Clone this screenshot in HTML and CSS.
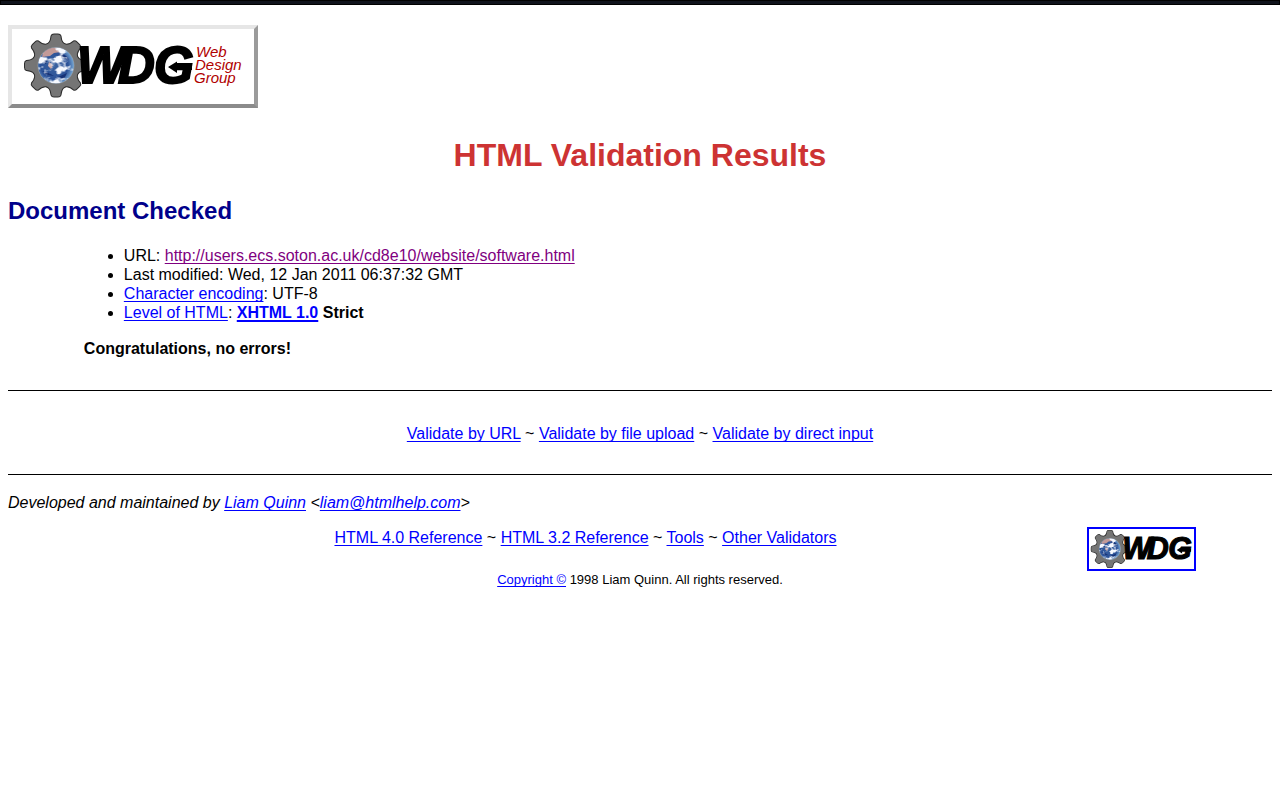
FILE: index.html
```html
<!DOCTYPE html>
<html lang="en">
<head>
<meta charset="utf-8">
<title>HTML Validation Results</title>
<link rel="stylesheet" href="styles.css">
</head>
<body>
<div class="top-bar"></div>
<div class="page">
  <header>
    <a class="brand" href="#" aria-label="Web Design Group">
      <svg class="brand-art" width="242" height="75" viewBox="12 29 242 75">
        <defs>
          <radialGradient id="sea" cx=".45" cy=".5" r=".55">
            <stop offset="0" stop-color="#39619f"/>
            <stop offset=".7" stop-color="#2c5298"/>
            <stop offset="1" stop-color="#79a9d4"/>
          </radialGradient>
          <filter id="clouds" x="0" y="0" width="1" height="1">
            <feTurbulence type="fractalNoise" baseFrequency=".09 .14" numOctaves="3" seed="8"/>
            <feColorMatrix values="0 0 0 0 .93  0 0 0 0 .95  0 0 0 0 1  5 0 0 0 -2.400"/>
            <feComposite in2="SourceGraphic" operator="in"/>
          </filter>
          <clipPath id="globe"><circle cx="56" cy="65.500" r="18"/></clipPath>
          <path id="tooth" d="M44 46 C49 44 51 42 51.500 36 Q52 34.500 54 34.500 H58 Q60 34.500 60.500 36 C61 42 63 44 68 46 L62 60 H50 Z"/>
          <g id="teeth">
            <use href="#tooth"/>
            <use href="#tooth" transform="rotate(45 56 65.500)"/>
            <use href="#tooth" transform="rotate(90 56 65.500)"/>
            <use href="#tooth" transform="rotate(135 56 65.500)"/>
            <use href="#tooth" transform="rotate(180 56 65.500)"/>
            <use href="#tooth" transform="rotate(225 56 65.500)"/>
            <use href="#tooth" transform="rotate(270 56 65.500)"/>
            <use href="#tooth" transform="rotate(315 56 65.500)"/>
          </g>
          <g id="mark">
            <use href="#teeth" fill="#333" stroke="#2d2d2d" stroke-width="2"/>
            <use href="#teeth" fill="#757575"/>
            <circle cx="56" cy="65.500" r="21" fill="#757575"/>
            <circle cx="56" cy="65.500" r="18.500" fill="#8f9499"/>
            <g clip-path="url(#globe)">
              <circle cx="56" cy="65.500" r="18" fill="url(#sea)"/>
              <path fill="#c39a98" d="M43 53 Q48 47 58 48 L61 52 L54 53 L50 56 L42 57Z M49 62 L53 65 L51 69 L48 66Z"/>
              <path fill="#173377" d="M60 53 Q67 55 69 60 L63 58 L57 58Z M42 71 L49 73 L54 76 L47 75Z M58 77 L67 73 L64 79Z M42 61 L47 60 L46 64Z"/>
              <circle cx="56" cy="65.500" r="18" filter="url(#clouds)"/>
            </g>
            <g class="mark-letters">
              <text x="77" y="83">W</text>
              <text x="118" y="83">D</text>
              <text x="154" y="83">G</text>
            </g>
            <path d="M168 67 L177 61.500 V65 H192 V70 H177 V73Z"/>
          </g>
        </defs>
        <use href="#mark"/>
        <g class="mark-words">
          <text x="196" y="57">Web</text>
          <text x="195" y="70">Design</text>
          <text x="194" y="83">Group</text>
        </g>
      </svg>
    </a>
  </header>
  <main>
    <h1>HTML Validation Results</h1>
    <h2>Document Checked</h2>
    <div class="results">
      <ul>
        <li>URL: <a class="visited" href="#">http://users.ecs.soton.ac.uk/cd8e10/website/software.html</a></li>
        <li>Last modified: Wed, 12 Jan 2011 06:37:32 GMT</li>
        <li><a href="#">Character encoding</a>: UTF-8</li>
        <li><a href="#">Level of HTML</a>: <strong><a href="#">XHTML 1.0</a> Strict</strong></li>
      </ul>
      <p class="verdict">Congratulations, no errors!</p>
    </div>
  </main>
  <nav class="validate"><a href="#">Validate by URL</a> ~ <a href="#">Validate by file upload</a> ~ <a href="#">Validate by direct input</a></nav>
  <footer>
    <address>Developed and maintained by <a href="#">Liam Quinn</a> &lt;<a href="#">liam@htmlhelp.com</a>&gt;</address>
    <div class="footer-row">
      <nav class="footer-links"><a href="#">HTML 4.0 Reference</a> ~ <a href="#">HTML 3.2 Reference</a> ~ <a href="#">Tools</a> ~ <a href="#">Other Validators</a></nav>
      <a class="badge" href="#" aria-label="WDG">
        <svg class="badge-art" width="105" height="40" viewBox="22 32 174 67"><use href="#mark"/></svg>
      </a>
    </div>
    <p class="copyright"><a href="#">Copyright ©</a> 1998 Liam Quinn. All rights reserved.</p>
  </footer>
</div>
</body>
</html>
```
FILE: styles.css
```css
body {
  margin: 0;
  background: #fff;
  color: #000;
  font: 16px/19px "Liberation Sans", Arial, sans-serif;
}
a {
  color: #00f;
  text-decoration-thickness: 1px;
  text-underline-offset: 2px;
  text-decoration-skip-ink: none;
}
.visited { color: #800080; }
strong a { text-decoration-thickness: 2px; }
.top-bar {
  height: 3px;
  border: 1px solid #000;
  background: #10131c;
}
.page { padding: 20px 8px; }
.brand {
  display: inline-block;
  vertical-align: top;
  border: 4px solid;
  border-color: #e6e6e6 #9b9b9b #8b8b8b #e6e6e6;
}
.brand-art, .badge-art { display: block; }
.mark-letters {
  font: italic 700 51px "Liberation Sans", Arial, sans-serif;
  fill: #000;
  stroke: #000;
  stroke-width: 2px;
}
.mark-words {
  font: italic 400 15px "Liberation Sans", Arial, sans-serif;
  fill: #b00000;
}
h1 {
  margin: 29px 0 23px;
  font-size: 32px;
  line-height: 37px;
  text-align: center;
  color: #cd3333;
}
h2 {
  margin: 0 0 21px;
  font-size: 24px;
  line-height: 28px;
  color: #00008b;
}
.results { margin: 0 6%; }
ul {
  margin: 0 0 17px;
  padding-left: 40px;
}
.verdict {
  margin: 0 0 32px;
  font-weight: bold;
}
.validate {
  border: solid #000;
  border-width: 1px 0;
  padding: 33px 0 31px;
  text-align: center;
}
address { margin: 18px 0 15px; }
.footer-row {
  display: flex;
  align-items: flex-start;
  margin: 0 6%;
}
.footer-links {
  flex: 1;
  padding-top: 1px;
  text-align: center;
}
.badge { border: 2px solid #00f; }
.copyright {
  margin: 0;
  font-size: 13px;
  line-height: 17px;
  text-align: center;
}
```
